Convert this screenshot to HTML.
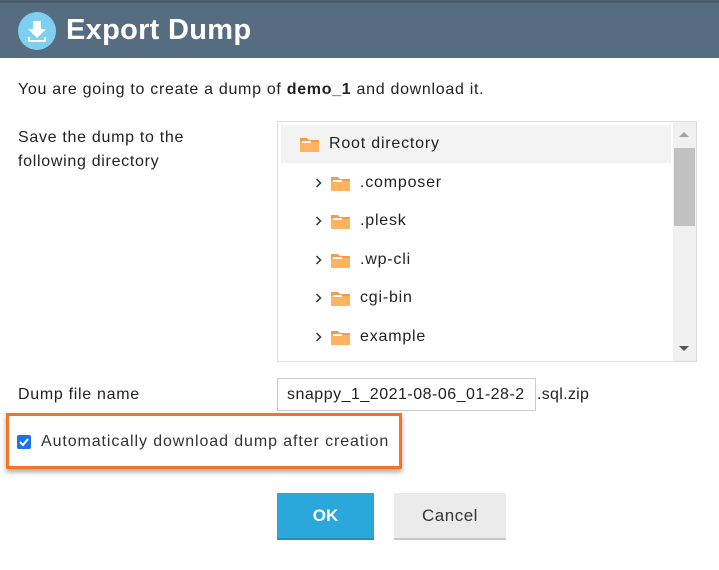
<!DOCTYPE html>
<html><head><style>
body{margin:0;width:719px;height:570px;background:#fff;font-family:"Liberation Sans",sans-serif;color:#222;position:relative;overflow:hidden}
.abs{position:absolute}
.hdr{left:0;top:0;width:719px;height:58px;background:#566c80;border-top:3px solid #4a5d6f;box-sizing:border-box}
.t{font-size:16px;white-space:nowrap;letter-spacing:0.7px}
.row{position:absolute;left:0;height:38px;width:390px;font-size:16px;line-height:38px;letter-spacing:0.8px}
.fold{position:absolute;width:19px;height:15px;top:12px}
.chev{position:absolute;top:14px}
</style></head><body>
<div class="abs hdr">
<svg class="abs" style="left:18px;top:9px" width="38" height="38" viewBox="0 0 38 38"><circle cx="19" cy="19" r="19" fill="#7fcff0"/><path d="M15 9h8v8h5l-9 9-9-9h5z" fill="#fff"/><path d="M11 25v4h16v-4" stroke="#fff" stroke-width="2" fill="none"/></svg>
<div class="abs" style="left:66px;top:11px;font-size:29px;color:#fff;font-weight:bold;letter-spacing:0.3px">Export Dump</div>
</div>
<div class="abs t" style="left:18px;top:81px">You are going to create a dump of <b>demo_1</b> and download it.</div>
<div class="abs t" style="left:18px;top:126px;line-height:24px">Save the dump to the<br>following directory</div>
<div class="abs" style="left:277px;top:121px;width:420px;height:241px;border:1px solid #ddd;box-sizing:border-box">
 <div class="abs" style="left:3px;top:3px;width:390px;height:38px;background:#f3f3f3"></div>
 <div class="abs" style="left:395px;top:0;width:23px;height:239px;background:#f0f0f0">
  <div class="abs" style="left:1px;top:26px;width:21px;height:78px;background:#c1c1c1"></div>
  <div class="abs" style="left:6px;top:10px;width:0;height:0;border:5px solid transparent;border-bottom:5px solid #a0a0a0;border-top:0"></div>
  <div class="abs" style="left:6px;top:224px;width:0;height:0;border:5px solid transparent;border-top:5px solid #555;border-bottom:0"></div>
 </div>
 <div class="row" style="top:3px"><svg class="fold" style="left:22px" viewBox="0 0 19 15"><path d="M0 1h7l2 2h10v12H0z" fill="#f5994f"/><rect x="0" y="5" width="19" height="10" fill="#fdb35f"/><rect x="2" y="4" width="9" height="2" fill="#fff"/></svg><span class="abs" style="left:51px">Root directory</span></div>
 <div class="row" style="top:42px"><svg class="chev" style="left:37px" width="8" height="10"><path d="M1.5 1l4 4-4 4" stroke="#333" stroke-width="1.5" fill="none"/></svg><svg class="fold" style="left:53px" viewBox="0 0 19 15"><path d="M0 1h7l2 2h10v12H0z" fill="#f5994f"/><rect x="0" y="5" width="19" height="10" fill="#fdb35f"/><rect x="2" y="4" width="9" height="2" fill="#fff"/></svg><span class="abs" style="left:82px">.composer</span></div>
 <div class="row" style="top:80px"><svg class="chev" style="left:37px" width="8" height="10"><path d="M1.5 1l4 4-4 4" stroke="#333" stroke-width="1.5" fill="none"/></svg><svg class="fold" style="left:53px" viewBox="0 0 19 15"><path d="M0 1h7l2 2h10v12H0z" fill="#f5994f"/><rect x="0" y="5" width="19" height="10" fill="#fdb35f"/><rect x="2" y="4" width="9" height="2" fill="#fff"/></svg><span class="abs" style="left:82px">.plesk</span></div>
 <div class="row" style="top:119px"><svg class="chev" style="left:37px" width="8" height="10"><path d="M1.5 1l4 4-4 4" stroke="#333" stroke-width="1.5" fill="none"/></svg><svg class="fold" style="left:53px" viewBox="0 0 19 15"><path d="M0 1h7l2 2h10v12H0z" fill="#f5994f"/><rect x="0" y="5" width="19" height="10" fill="#fdb35f"/><rect x="2" y="4" width="9" height="2" fill="#fff"/></svg><span class="abs" style="left:82px">.wp-cli</span></div>
 <div class="row" style="top:157px"><svg class="chev" style="left:37px" width="8" height="10"><path d="M1.5 1l4 4-4 4" stroke="#333" stroke-width="1.5" fill="none"/></svg><svg class="fold" style="left:53px" viewBox="0 0 19 15"><path d="M0 1h7l2 2h10v12H0z" fill="#f5994f"/><rect x="0" y="5" width="19" height="10" fill="#fdb35f"/><rect x="2" y="4" width="9" height="2" fill="#fff"/></svg><span class="abs" style="left:82px">cgi-bin</span></div>
 <div class="row" style="top:196px"><svg class="chev" style="left:37px" width="8" height="10"><path d="M1.5 1l4 4-4 4" stroke="#333" stroke-width="1.5" fill="none"/></svg><svg class="fold" style="left:53px" viewBox="0 0 19 15"><path d="M0 1h7l2 2h10v12H0z" fill="#f5994f"/><rect x="0" y="5" width="19" height="10" fill="#fdb35f"/><rect x="2" y="4" width="9" height="2" fill="#fff"/></svg><span class="abs" style="left:82px">example</span></div>
</div>
<div class="abs t" style="left:18px;top:386px">Dump file name</div>
<div class="abs" style="left:277px;top:378px;width:259px;height:33px;border:1px solid #ccc;box-sizing:border-box;font-size:16px;letter-spacing:0.5px;line-height:31px;padding-left:9px;overflow:hidden;white-space:nowrap">snappy_1_2021-08-06_01-28-2</div>
<div class="abs t" style="left:537px;top:386px;letter-spacing:0.3px">.sql.zip</div>
<div class="abs" style="left:6px;top:413px;width:396px;height:56px;border:3px solid #f47423;box-sizing:border-box;box-shadow:0 3px 5px rgba(0,0,0,.35)"></div>
<div class="abs" style="left:17px;top:435px;width:14px;height:14px;background:#1a73e8;border-radius:2px"><svg width="14" height="14"><path d="M3 7l3 3 5-6" stroke="#fff" stroke-width="2" fill="none"/></svg></div>
<div class="abs t" style="left:41px;top:433px;font-size:16px;color:#333;letter-spacing:0.9px">Automatically download dump after creation</div>
<div class="abs" style="left:277px;top:493px;width:97px;height:47px;background:#2aa8dc;border-bottom:2px solid #1e8fbf;box-sizing:border-box;color:#fff;font-weight:bold;font-size:17px;text-align:center;line-height:46px">OK</div>
<div class="abs" style="left:394px;top:493px;width:112px;height:47px;background:#ebebeb;border-bottom:2px solid #c8c8c8;box-sizing:border-box;color:#333;font-size:17px;text-align:center;line-height:46px;letter-spacing:0.5px">Cancel</div>
</body></html>
